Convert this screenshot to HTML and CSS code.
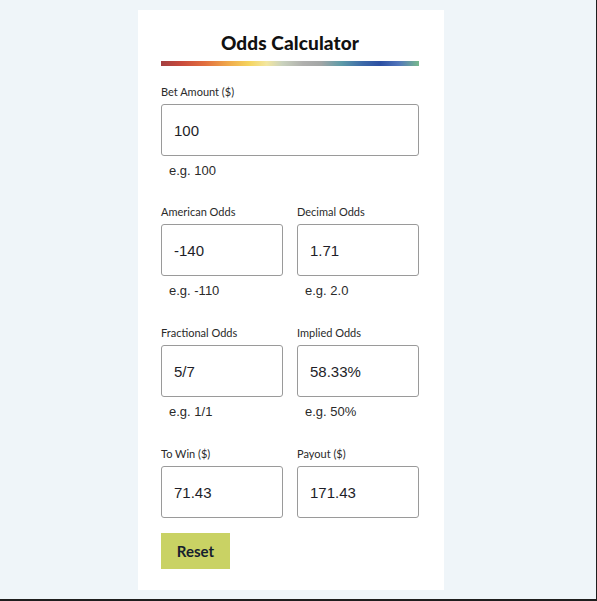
FILE: index.html
```html
<!DOCTYPE html>
<html>
<head>
<meta charset="utf-8">
<link rel="stylesheet" href="styles.css">
</head>
<body>
<div class="frame">
  <div class="card">
    <h1 class="title">Odds Calculator</h1>
    <div class="rainbow"></div>
    <div class="field full">
      <div class="label">Bet Amount ($)</div>
      <div class="input">100</div>
      <div class="hint">e.g. 100</div>
    </div>
    <div class="grid">
      <div class="field">
        <div class="label">American Odds</div>
        <div class="input">-140</div>
        <div class="hint">e.g. -110</div>
      </div>
      <div class="field">
        <div class="label">Decimal Odds</div>
        <div class="input">1.71</div>
        <div class="hint">e.g. 2.0</div>
      </div>
      <div class="field">
        <div class="label">Fractional Odds</div>
        <div class="input">5/7</div>
        <div class="hint">e.g. 1/1</div>
      </div>
      <div class="field">
        <div class="label">Implied Odds</div>
        <div class="input">58.33%</div>
        <div class="hint">e.g. 50%</div>
      </div>
      <div class="field">
        <div class="label">To Win ($)</div>
        <div class="input">71.43</div>
      </div>
      <div class="field">
        <div class="label">Payout ($)</div>
        <div class="input">171.43</div>
      </div>
    </div>
    <button class="reset">Reset</button>
  </div>
</div>
</body>
</html>
```
FILE: styles.css
```css
html, body {
  margin: 0;
  padding: 0;
}
body {
  background: #eff5f9;
}
.frame {
  box-sizing: border-box;
  width: 597px;
  height: 601px;
  border-right: 1px solid #1e1e1e;
  border-bottom: 2px solid #1e1e1e;
  background: #eff5f9;
  padding-top: 10px;
  padding-left: 138px;
}
.card {
  box-sizing: border-box;
  width: 306px;
  height: 580px;
  background: #ffffff;
  padding: 21px 25px 21px 23px;
}
.title {
  margin: 0;
  font-family: Lato, "Liberation Sans", sans-serif;
  font-weight: 900;
  font-size: 19px;
  line-height: 24px;
  text-align: center;
  color: #111;
  letter-spacing: 0.1px;
}
.rainbow {
  margin-top: 6px;
  height: 5px;
  background: linear-gradient(90deg, #a33f41 0%, #c94a3c 8%, #e26f3f 17%, #f0a94b 26%, #f5d45e 34%, #f3e7a0 41%, #c9d2bd 47%, #b0b0ae 55%, #a3a6a6 62%, #5d9ba8 70%, #3d6aa9 78%, #2c4fa3 85%, #5175bb 92%, #78b98d 100%);
}
.field.full {
  margin-top: 19px;
}
.label {
  font-family: Lato, "Liberation Sans", sans-serif;
  font-size: 11px;
  line-height: 14px;
  color: #2a2a2a;
}
.input {
  box-sizing: border-box;
  margin-top: 5px;
  height: 52px;
  border: 1px solid #9a9a9a;
  border-radius: 3px;
  padding-left: 12px;
  display: flex;
  align-items: center;
  font-family: "Liberation Sans", Arial, sans-serif;
  font-size: 15px;
  color: #1e1e28;
}
.hint {
  margin-top: 7px;
  padding-left: 8px;
  font-family: "Liberation Sans", Arial, sans-serif;
  font-size: 13px;
  line-height: 16px;
  color: #2a2a2a;
}
.grid {
  margin-top: 26px;
  display: grid;
  grid-template-columns: 122px 122px;
  column-gap: 14px;
  row-gap: 27px;
}
.reset {
  margin-top: 15px;
  width: 69px;
  height: 36px;
  border: none;
  background: #c9d264;
  font-family: Lato, "Liberation Sans", sans-serif;
  font-weight: 700;
  font-size: 15px;
  color: #15202e;
  padding: 0;
}
```
